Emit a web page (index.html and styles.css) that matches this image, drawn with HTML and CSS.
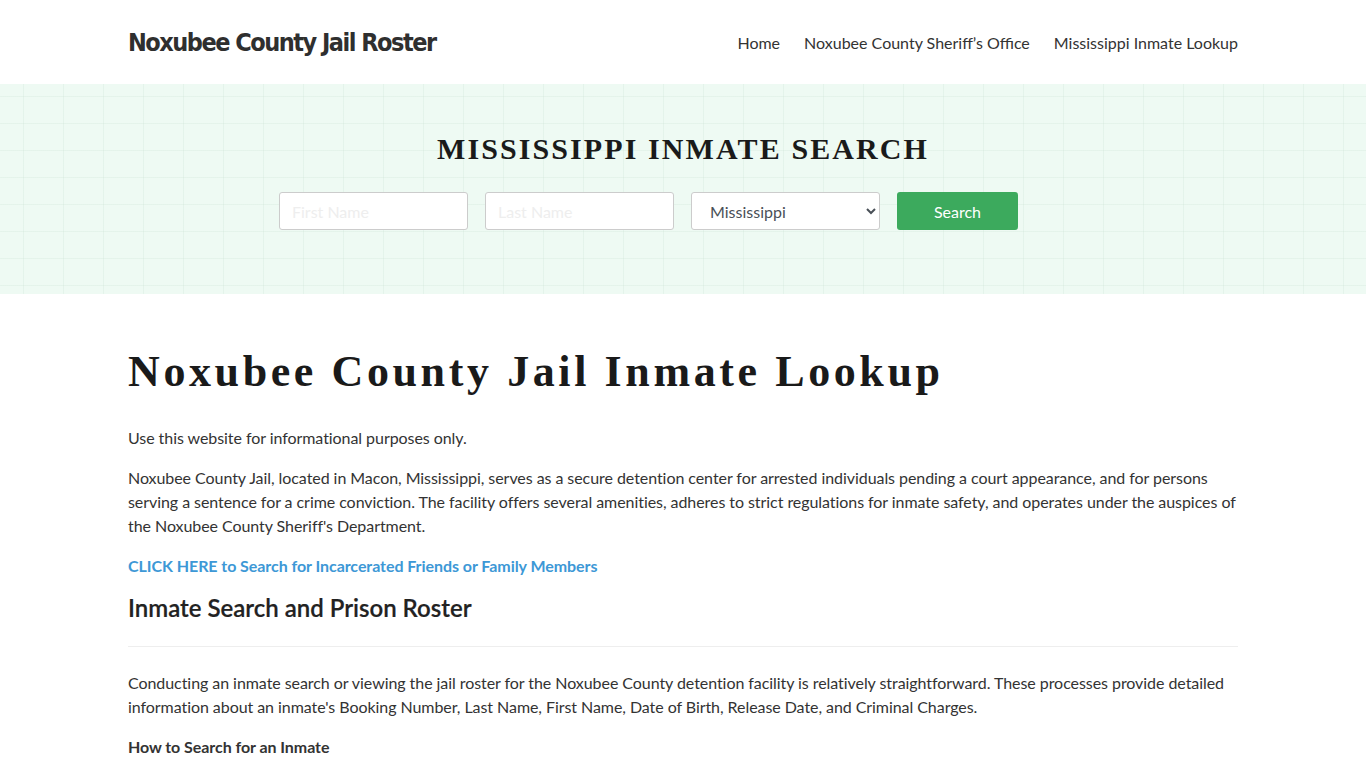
FILE: index.html
```html
<!DOCTYPE html>
<html lang="en">
<head>
<meta charset="utf-8">
<title>Noxubee County Jail Roster</title>
<link rel="stylesheet" href="styles.css">
</head>
<body>
<header class="site-header">
  <div class="container header-inner">
    <a class="logo" href="#">Noxubee County Jail Roster</a>
    <nav class="nav">
      <a href="#">Home</a>
      <a href="#">Noxubee County Sheriff’s Office</a>
      <a href="#">Mississippi Inmate Lookup</a>
    </nav>
  </div>
</header>
<section class="banner">
  <div class="container">
    <h2 class="banner-title">MISSISSIPPI INMATE SEARCH</h2>
    <form class="search-form">
      <input class="field" type="text" placeholder="First Name">
      <input class="field" type="text" placeholder="Last Name">
      <select class="field select"><option>Mississippi</option></select>
      <button class="btn" type="button">Search</button>
    </form>
  </div>
</section>
<main class="container content">
  <h1 class="page-title">Noxubee County Jail Inmate Lookup</h1>
  <p>Use this website for informational purposes only.</p>
  <p>Noxubee County Jail, located in Macon, Mississippi, serves as a secure detention center for arrested individuals pending a court appearance, and for persons serving a sentence for a crime conviction. The facility offers several amenities, adheres to strict regulations for inmate safety, and operates under the auspices of the Noxubee County Sheriff's Department.</p>
  <p><a class="cta" href="#">CLICK HERE to Search for Incarcerated Friends or Family Members</a></p>
  <h2 class="section-title">Inmate Search and Prison Roster</h2>
  <hr class="rule">
  <p>Conducting an inmate search or viewing the jail roster for the Noxubee County detention facility is relatively straightforward. These processes provide detailed information about an inmate's Booking Number, Last Name, First Name, Date of Birth, Release Date, and Criminal Charges.</p>
  <p class="strong">How to Search for an Inmate</p>
</main>
</body>
</html>
```
FILE: styles.css
```css
* { box-sizing: border-box; }
html, body { margin: 0; padding: 0; }
body {
  font-family: Lato, "Open Sans", sans-serif;
  font-size: 16px;
  line-height: 24px;
  letter-spacing: -0.06px;
  color: #333;
  background: #fff;
}
a { text-decoration: none; }
.container {
  width: 1110px;
  margin: 0 auto;
}
.site-header {
  height: 84px;
  background: #fff;
}
.header-inner {
  height: 84px;
  display: flex;
  align-items: center;
  justify-content: space-between;
}
.logo {
  font-family: "DejaVu Sans", sans-serif;
  font-stretch: condensed;
  font-weight: 700;
  font-size: 25px;
  letter-spacing: -1.5px;
  color: #2f2f2f;
  padding-top: 2px;
}
.nav {
  display: flex;
  gap: 24px;
  padding-top: 2px;
}
.nav a {
  font-size: 16px;
  letter-spacing: 0;
  color: #333;
}
.banner {
  height: 210px;
  background-color: #eefaf3;
  background-image:
    linear-gradient(90deg, rgba(200,225,210,0.25) 1px, transparent 1px),
    linear-gradient(0deg, rgba(200,225,210,0.25) 1px, transparent 1px);
  background-size: 40px 27px;
  background-position: 23px 13px;
  padding-top: 45px;
}
.banner-title {
  margin: 0;
  text-align: center;
  font-family: "Liberation Serif", serif;
  font-weight: 700;
  font-size: 30px;
  line-height: 40px;
  letter-spacing: 2.1px;
  color: #1a1a1a;
}
.search-form {
  display: flex;
  gap: 17px;
  margin-top: 23px;
  padding-left: 151px;
}
.field {
  width: 189px;
  height: 38px;
  border: 1px solid #ccc;
  border-radius: 3px;
  background: #fff;
  font-family: Lato, sans-serif;
  font-size: 16px;
  padding: 0 12px;
  color: #495057;
}
.field::placeholder { color: #eee; }
.select { padding: 0 10px 0 14px; }
.btn {
  width: 121px;
  height: 38px;
  border: 0;
  border-radius: 3px;
  background: #3caa5d;
  color: #fff;
  font-family: Lato, sans-serif;
  font-size: 16px;
}
.content { padding-top: 49px; }
.page-title {
  margin: 0 0 25px;
  font-family: "Liberation Serif", serif;
  font-weight: 700;
  font-size: 44px;
  line-height: 58px;
  letter-spacing: 3.6px;
  color: #1a1a1a;
}
.content p { margin: 0 0 16px; }
.cta {
  color: #3d98d6;
  font-weight: 700;
}
.section-title {
  margin: 0;
  font-family: Lato, sans-serif;
  font-weight: 600;
  font-size: 24px;
  line-height: 28px;
  letter-spacing: 0;
  -webkit-text-stroke: 0.2px #222;
  color: #222;
}
.rule {
  border: 0;
  border-top: 1px solid #eee;
  margin: 24px 0 24px;
}
.strong { font-weight: 700; }
```
